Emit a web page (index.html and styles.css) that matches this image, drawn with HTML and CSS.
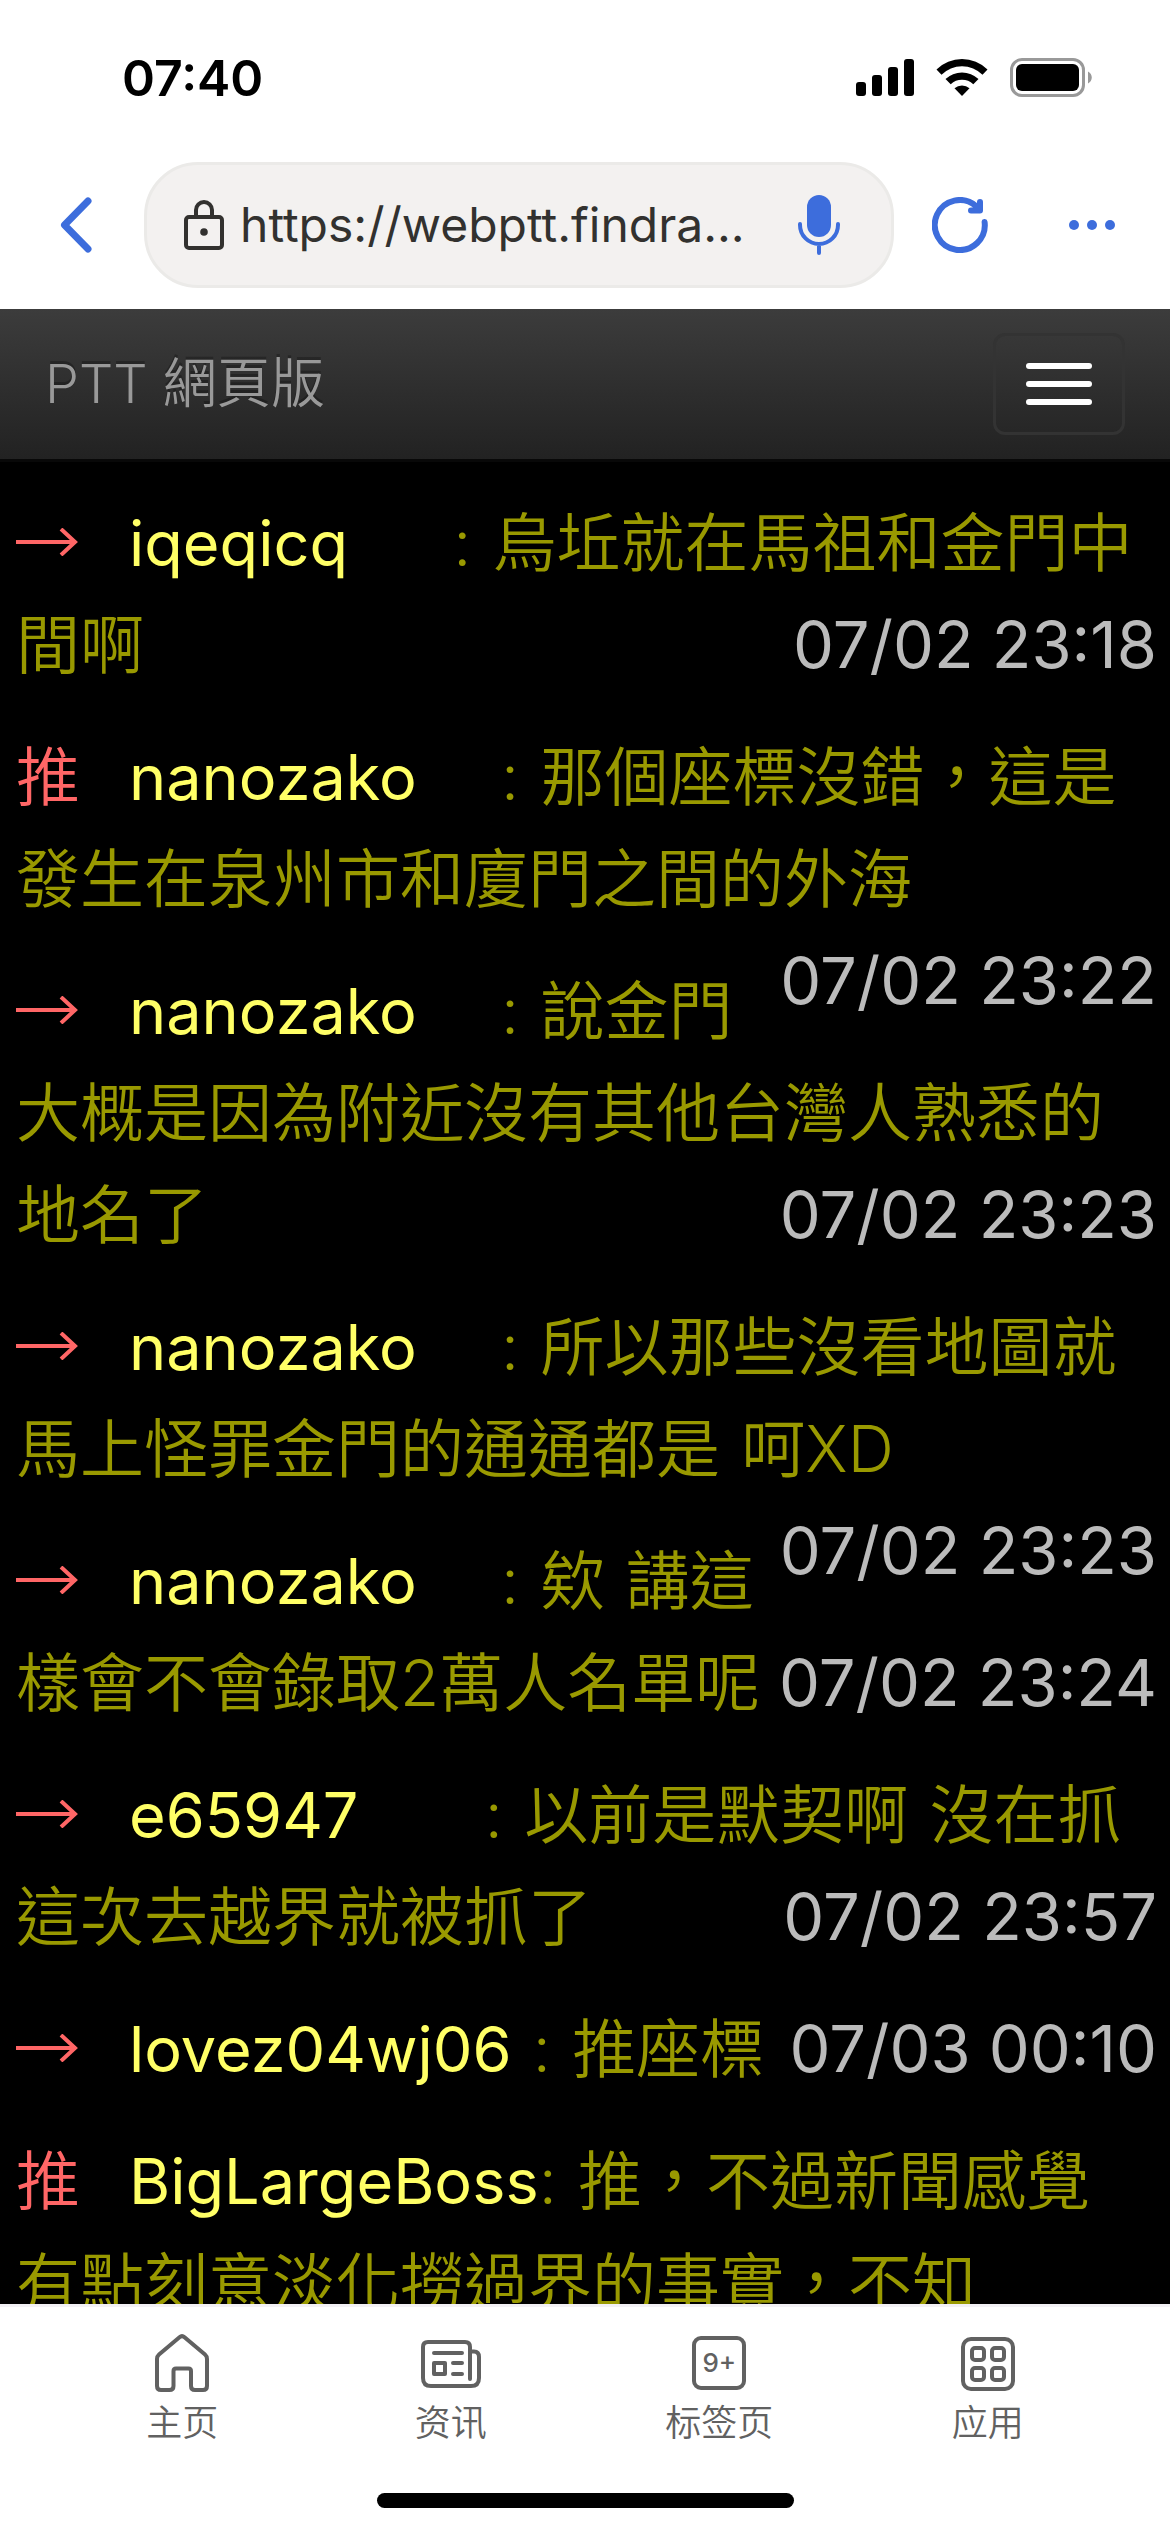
FILE: index.html
```html
<!DOCTYPE html>
<html lang="zh-TW">
<head>
<meta charset="utf-8">
<meta name="viewport" content="width=device-width, initial-scale=1">
<title>PTT 網頁版</title>
<link rel="stylesheet" href="styles.css">
</head>
<body>
<header class="chrome" lang="zh-CN">
  <div class="status">
    <time class="clock">07:40</time>
    <div class="status-icons">
      <svg width="58" height="38" viewBox="0 0 58 38" aria-hidden="true">
        <rect x="0" y="23" width="10" height="14" rx="3"/>
        <rect x="16" y="16" width="10" height="21" rx="3"/>
        <rect x="32" y="8" width="10" height="29" rx="3"/>
        <rect x="48" y="0" width="10" height="37" rx="3"/>
      </svg>
      <svg width="52" height="38" viewBox="0 0 52 38" aria-hidden="true">
        <path d="M0.5 10.5A36.500 36.500 0 0 1 51.500 10.500L46.500 15.700A29 29 0 0 0 5.500 15.700Z"/>
        <path d="M9.500 20A24 24 0 0 1 42.500 20L37.300 25.200A16.500 16.500 0 0 0 14.700 25.200Z"/>
        <path d="M18.500 29.300A11.500 11.500 0 0 1 33.500 29.300L26 37Z"/>
      </svg>
      <svg width="82" height="40" viewBox="0 0 82 40" aria-hidden="true">
        <rect x="1.500" y="1.500" width="72" height="36" rx="10.500" fill="none" stroke="#999" stroke-width="3"/>
        <rect x="6" y="6" width="63" height="27" rx="6"/>
        <path d="M78 13.500C83 16 83 23 78 25.500Z" fill="#999"/>
      </svg>
    </div>
  </div>
  <form class="toolbar">
    <button class="tool" type="button" aria-label="返回">
      <svg class="line" width="32" height="56" viewBox="0 0 32 56" stroke-width="7"><path d="M28 4L4.500 28L28 52"/></svg>
    </button>
    <div class="address">
      <svg width="40" height="50" viewBox="0 0 40 50" fill="none" stroke="#32312f" stroke-width="4" aria-hidden="true">
        <rect x="2" y="17" width="36" height="31" rx="3"/>
        <path d="M12 17V10A8 8 0 0 1 28 10V17"/>
        <circle cx="20" cy="32" r="3.800" fill="#32312f" stroke="none"/>
      </svg>
      <input class="url" type="text" aria-label="网址" value="https://webptt.findra...">
      <button class="tool" type="button" aria-label="语音搜索">
        <svg class="line" width="42" height="60" viewBox="0 0 42 60" stroke-width="4"><rect x="9" y="0" width="24" height="42" rx="12" fill="currentColor" stroke="none"/><path d="M2 29V30A19 19 0 0 0 40 30V29M21 49V58"/></svg>
      </button>
    </div>
    <button class="tool reload" type="button" aria-label="刷新">
      <svg class="line" width="56" height="56" viewBox="0 0 56 56" stroke-width="6"><path d="M52.600 25A25 25 0 1 1 44 9L47 13M48 5V13.500H39"/></svg>
    </button>
    <button class="tool more" type="button" aria-label="更多">
      <svg width="46" height="10" viewBox="0 0 46 10" fill="currentColor"><circle cx="5" cy="5" r="5"/><circle cx="23" cy="5" r="5"/><circle cx="41" cy="5" r="5"/></svg>
    </button>
  </form>
</header>

<nav class="navbar">
  <a class="brand" href="#">PTT 網頁版</a>
  <button class="toggle" type="button" aria-label="選單"><span></span><span></span><span></span></button>
</nav>

<main class="pushes">
  <div class="push"><span class="tag"><svg class="arrow" viewBox="0 0 64 28" role="img" aria-label="→"><path d="M0 14H59M45 1L59 14L45 27"/></svg></span><span class="user">iqeqicq&emsp13;&emsp13;&emsp13;&emsp13;&emsp13;</span><span class="content">:&emsp13;烏坵就在馬祖和金門中間啊</span><time class="date">07/02 23:18</time></div>
  <div class="push"><span class="tag">推</span><span class="user">nanozako&emsp13;&emsp13;&emsp13;&emsp13;</span><span class="content">:&emsp13;那個座標沒錯，這是發生在泉州市和廈門之間的外海</span><time class="date">07/02 23:22</time></div>
  <div class="push"><span class="tag"><svg class="arrow" viewBox="0 0 64 28" role="img" aria-label="→"><path d="M0 14H59M45 1L59 14L45 27"/></svg></span><span class="user">nanozako&emsp13;&emsp13;&emsp13;&emsp13;</span><span class="content">:&emsp13;說金門大概是因為附近沒有其他台灣人熟悉的地名了</span><time class="date">07/02 23:23</time></div>
  <div class="push"><span class="tag"><svg class="arrow" viewBox="0 0 64 28" role="img" aria-label="→"><path d="M0 14H59M45 1L59 14L45 27"/></svg></span><span class="user">nanozako&emsp13;&emsp13;&emsp13;&emsp13;</span><span class="content">:&emsp13;所以那些沒看地圖就馬上怪罪金門的通通都是&emsp13;呵XD</span><time class="date">07/02 23:23</time></div>
  <div class="push"><span class="tag"><svg class="arrow" viewBox="0 0 64 28" role="img" aria-label="→"><path d="M0 14H59M45 1L59 14L45 27"/></svg></span><span class="user">nanozako&emsp13;&emsp13;&emsp13;&emsp13;</span><span class="content">:&emsp13;欸&emsp13;講這樣會不會錄取2萬人名單呢</span><time class="date">07/02 23:24</time></div>
  <div class="push"><span class="tag"><svg class="arrow" viewBox="0 0 64 28" role="img" aria-label="→"><path d="M0 14H59M45 1L59 14L45 27"/></svg></span><span class="user">e65947&emsp13;&emsp13;&emsp13;&emsp13;&emsp13;&emsp13;</span><span class="content">:&emsp13;以前是默契啊&emsp13;沒在抓&emsp13;這次去越界就被抓了</span><time class="date">07/02 23:57</time></div>
  <div class="push"><span class="tag"><svg class="arrow" viewBox="0 0 64 28" role="img" aria-label="→"><path d="M0 14H59M45 1L59 14L45 27"/></svg></span><span class="user">lovez04wj06&emsp13;</span><span class="content">:&emsp13;推座標</span><time class="date">07/03 00:10</time></div>
  <div class="push"><span class="tag">推</span><span class="user">BigLargeBoss</span><span class="content">:&emsp13;推，不過新聞感覺<br>有點刻意淡化撈過界的事實，不知</span></div>
</main>

<footer class="tabs" lang="zh-CN">
  <nav class="tab-row">
    <a class="tab" href="#">
      <svg class="line" width="60" height="60" viewBox="0 0 60 60" stroke-width="4"><path d="M27.500 4.200Q30 2 32.500 4.200L53 21.500Q55 23.200 55 26V53Q55 57 51 57H43Q39 57 39 53V38Q39 35.500 36.500 35.500H24Q21.500 35.500 21.500 38V53Q21.500 57 17.500 57H9Q5 57 5 53V26Q5 23.200 7 21.500Z"/></svg>
      主页
    </a>
    <a class="tab" href="#">
      <svg class="line" width="60" height="60" viewBox="0 0 60 60" stroke-width="4"><path d="M49 46V14Q49 9 44 9H7Q2 9 2 14V45Q2 53 10 53H50Q58 53 58 45V24Q58 18.500 53 18.500H50M13 20H41M32 30H41M32 41H41"/><rect x="13" y="30" width="11" height="11"/></svg>
      资讯
    </a>
    <a class="tab" href="#">
      <span class="icon-box"><span class="count">9+</span></span>
      标签页
    </a>
    <a class="tab" href="#">
      <svg class="line" width="60" height="60" viewBox="0 0 60 60" stroke-width="4"><rect x="5" y="6" width="50" height="50" rx="8"/><rect x="14" y="15" width="12" height="12" rx="3"/><rect x="34" y="15" width="12" height="12" rx="3"/><rect x="14" y="35" width="12" height="12" rx="3"/><rect x="34" y="35" width="12" height="12" rx="3"/></svg>
      应用
    </a>
  </nav>
  <div class="home-bar"></div>
</footer>
</body>
</html>
```
FILE: styles.css
```css
* {
  box-sizing: border-box;
}

body {
  display: flex;
  flex-direction: column;
  height: 100vh;
  margin: 0;
  background: #000;
  font-family: Inter, "Noto Sans CJK TC", sans-serif;
}

button {
  padding: 0;
  border: 0;
  background: none;
}

svg {
  display: block;
  flex: none;
}

.line {
  fill: none;
  stroke: currentColor;
  stroke-linecap: round;
  stroke-linejoin: round;
}

/* Browser chrome */
.chrome {
  flex: none;
  padding-bottom: 21px;
  background: #fff;
}

.status {
  display: flex;
  align-items: center;
  justify-content: space-between;
  height: 156px;
  padding: 0 78px 0 122px;
}

.clock {
  font-size: 50px;
  font-weight: 600;
}

.status-icons {
  display: flex;
  align-items: center;
  gap: 22px;
}

.toolbar {
  display: flex;
  align-items: center;
  margin: 0;
  padding: 6px 55px 0 60px;
}

.tool {
  color: #3d6ddc;
}

.address {
  display: flex;
  flex: 1;
  align-items: center;
  min-width: 0;
  height: 126px;
  margin: 0 38px 0 52px;
  padding: 0 51px 0 37px;
  border: 3px solid #ebeae8;
  border-radius: 54px;
  background: #f3f1f0;
}

.url {
  flex: 1;
  min-width: 0;
  margin-left: 16px;
  padding: 0;
  border: 0;
  outline: 0;
  background: none;
  color: #32312f;
  font: 400 48px/60px Inter, sans-serif;
}

.more {
  margin-left: 81px;
}

/* Site navigation bar */
.navbar {
  display: flex;
  flex: none;
  align-items: center;
  justify-content: space-between;
  padding: 24px 45px;
  border-bottom: 3px solid #080808;
  background: linear-gradient(#3c3c3c, #222);
}

.brand {
  color: #999;
  font-size: 54px;
  font-weight: 350;
  line-height: 60px;
  text-decoration: none;
  text-shadow: 0 -3px 0 rgba(0, 0, 0, 0.25);
}

.toggle {
  display: grid;
  gap: 12px;
  padding: 27px 30px;
  border: 3px solid #333;
  border-radius: 12px;
}

.toggle span {
  width: 66px;
  height: 6px;
  border-radius: 3px;
  background: #fff;
}

/* Comments */
.pushes {
  flex: 1;
  min-height: 0;
  overflow: hidden;
  padding: 30px 13px 0 16px;
  font-size: 64px;
  font-weight: 350;
  line-height: 102px;
}

.push {
  margin-bottom: 30px;
}

.tag {
  display: inline-block;
  width: 113px;
  color: #f66;
}

.arrow {
  display: inline-block;
  width: 64px;
  height: 28px;
  margin-bottom: 10px;
  fill: none;
  stroke: #f66;
  stroke-width: 4;
}

.user {
  color: #ff6;
  font-size: 63px;
  font-weight: 400;
  line-height: 1;
}

.content {
  color: #990;
}

.date {
  float: right;
  color: #bbb;
  font-size: 65px;
  font-weight: 400;
}

/* Bottom tabs */
.tabs {
  flex: none;
  padding-bottom: 24px;
  border-top: 3px solid #f3f1f5;
  background: #fff;
}

.tab-row {
  display: grid;
  grid-template-columns: repeat(4, 1fr);
  padding: 26px 48px 0;
}

.tab {
  display: grid;
  justify-items: center;
  gap: 6px;
  color: #616161;
  font: 350 36px/48px Inter, "Noto Sans CJK SC", sans-serif;
  text-decoration: none;
}

.icon-box {
  display: grid;
  height: 60px;
  place-items: center;
}

.count {
  display: grid;
  width: 54px;
  height: 54px;
  place-items: center;
  border: 4px solid;
  border-radius: 9px;
  font-size: 26px;
  font-weight: 500;
  line-height: 30px;
}

.home-bar {
  width: 417px;
  height: 15px;
  margin: 46px auto 0;
  border-radius: 8px;
  background: #000;
}
```
